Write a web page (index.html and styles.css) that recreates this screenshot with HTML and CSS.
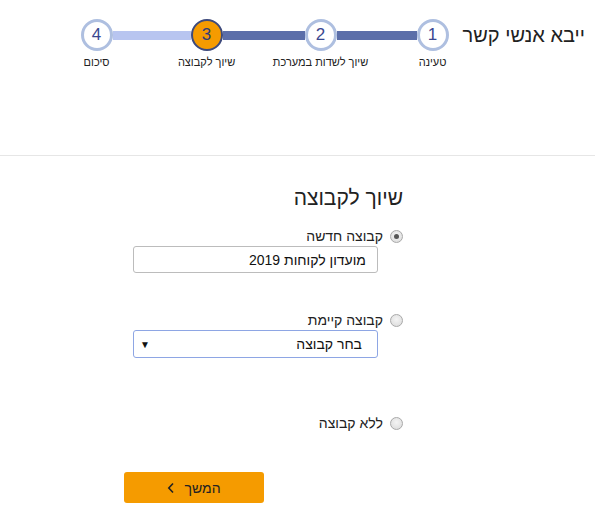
FILE: index.html
```html
<!DOCTYPE html>
<html lang="he" dir="rtl">
<head>
<meta charset="utf-8">
<link rel="stylesheet" href="styles.css">
</head>
<body>
<header class="header">
  <h1 class="page-title">ייבא אנשי קשר</h1>
  <div class="stepper">
    <div class="step">
      <div class="circle">1</div>
      <div class="step-label">טעינה</div>
    </div>
    <div class="line dark w80"></div>
    <div class="step">
      <div class="circle">2</div>
      <div class="step-label">שיוך לשדות במערכת</div>
    </div>
    <div class="line dark w82"></div>
    <div class="step">
      <div class="circle current">3</div>
      <div class="step-label">שיוך לקבוצה</div>
    </div>
    <div class="line light w78"></div>
    <div class="step">
      <div class="circle">4</div>
      <div class="step-label">סיכום</div>
    </div>
  </div>
</header>
<main class="main">
  <h2 class="section-title">שיוך לקבוצה</h2>
  <div class="option first">
    <span class="radio checked"></span>
    <span class="option-label">קבוצה חדשה</span>
  </div>
  <div class="field">מועדון לקוחות 2019</div>
  <div class="option second">
    <span class="radio"></span>
    <span class="option-label">קבוצה קיימת</span>
  </div>
  <div class="field select">
    <span>בחר קבוצה</span>
    <span class="arrow">▼</span>
  </div>
  <div class="option third">
    <span class="radio"></span>
    <span class="option-label">ללא קבוצה</span>
  </div>
  <button class="next-btn"><span>המשך</span><svg width="8" height="12" viewBox="0 0 8 12"><path d="M6 1.5 L1.8 6 L6 10.5" fill="none" stroke="#222" stroke-width="1.6"/></svg></button>
</main>
</body>
</html>
```

FILE: styles.css
```css
* { box-sizing: border-box; }
body {
  margin: 0;
  font-family: "Liberation Sans", Arial, sans-serif;
  color: #222;
  background: #fff;
}
.header {
  height: 156px;
  border-bottom: 1px solid #e6e6e6;
  display: flex;
  align-items: flex-start;
  padding-top: 19px;
  padding-right: 10px;
  gap: 14px;
}
.page-title {
  margin: 4px 0 0;
  font-size: 20px;
  line-height: 24px;
  font-weight: normal;
  color: #222;
}
.stepper {
  display: flex;
  align-items: flex-start;
}
.step {
  width: 32px;
  display: flex;
  flex-direction: column;
  align-items: center;
}
.circle {
  width: 32px;
  height: 32px;
  border-radius: 50%;
  border: 3px solid #aebfe0;
  background: #fff;
  color: #3a4790;
  font-size: 17px;
  display: flex;
  align-items: center;
  justify-content: center;
}
.circle.current {
  background: #f59b00;
  border: 2px solid #3d4a7c;
  color: #2d3a78;
}
.step-label {
  margin-top: 5px;
  font-size: 11px;
  line-height: 13px;
  white-space: nowrap;
  color: #222;
}
.line {
  height: 9px;
  margin-top: 12px;
}
.line.dark { background: #5b6ea9; }
.line.light { background: #b8c5f0; }
.w80 { width: 80px; }
.w82 { width: 82px; }
.w78 { width: 78px; }

.main {
  padding: 0 192px 0 124px;
  display: flex;
  flex-direction: column;
  align-items: flex-start;
}
.section-title {
  margin: 30px 0 0;
  font-size: 21px;
  line-height: 24px;
  font-weight: normal;
  color: #222;
}
.option {
  display: flex;
  align-items: center;
  gap: 7px;
  height: 16px;
}
.option.first { margin-top: 18px; }
.option.second { margin-top: 39px; }
.option.third { margin-top: 57px; }
.option-label {
  font-size: 14px;
  line-height: 16px;
  color: #222;
}
.radio {
  width: 13px;
  height: 13px;
  border-radius: 50%;
  border: 1px solid #a9a9a9;
  background: radial-gradient(circle at 50% 40%, #f4f4f4, #d9d9d9);
  display: flex;
  align-items: center;
  justify-content: center;
}
.radio.checked::after {
  content: "";
  width: 5px;
  height: 5px;
  border-radius: 50%;
  background: #555;
}
.field {
  margin-top: 2px;
  margin-right: 25px;
  width: 245px;
  height: 27px;
  border: 1px solid #bcbcbc;
  border-radius: 3px;
  padding: 0 11px;
  font-size: 14px;
  display: flex;
  align-items: center;
  color: #111;
}
.field.select {
  height: 28px;
  border-color: #8ea6e4;
  padding: 0 15px 0 6px;
  justify-content: space-between;
}
.arrow {
  font-size: 10px;
  color: #111;
}
.next-btn {
  margin-top: 41px;
  align-self: flex-end;
  width: 140px;
  height: 31px;
  border: none;
  border-radius: 3px;
  background: #f59b00;
  font-family: "Liberation Sans", Arial, sans-serif;
  font-size: 14px;
  color: #222;
  display: flex;
  align-items: center;
  justify-content: center;
  gap: 9px;
  padding: 0;
}
```
